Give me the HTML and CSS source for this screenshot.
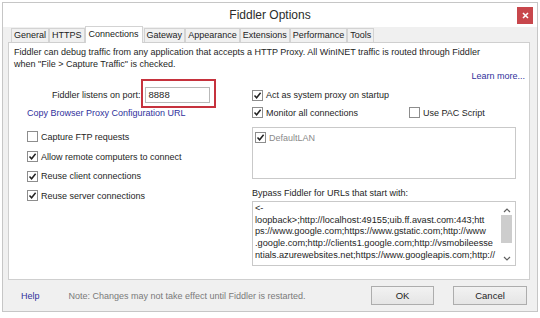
FILE: index.html
```html
<!DOCTYPE html>
<html lang="en">
<head>
  <meta charset="UTF-8" />
  <title>Fiddler Options</title>
  <link rel="stylesheet" href="styles.css">
</head>
<body>
  <div class="window">
    <div class="titlebar">
      <span class="title">Fiddler Options</span>
      <span class="close">
        <svg width="7" height="7" viewBox="0 0 7 7"><path d="M1 1 L6 6 M6 1 L1 6" stroke="#fff" stroke-width="1.6"/></svg>
      </span>
    </div>

    <div class="tabs">
      <span class="tab">General</span>
      <span class="tab">HTTPS</span>
      <span class="tab active">Connections</span>
      <span class="tab">Gateway</span>
      <span class="tab">Appearance</span>
      <span class="tab">Extensions</span>
      <span class="tab">Performance</span>
      <span class="tab">Tools</span>
    </div>

    <div class="panel">
      <p class="intro">Fiddler can debug traffic from any application that accepts a HTTP Proxy. All WinINET traffic is routed through Fiddler<br>when "File &gt; Capture Traffic" is checked.</p>
      <div class="learn"><a class="link">Learn more...</a></div>

      <div class="columns">
        <div class="col-left">
          <div class="port-row">
            <span>Fiddler listens on port:</span>
            <span class="highlight"><span class="port">8888</span></span>
          </div>
          <a class="link copy">Copy Browser Proxy Configuration URL</a>
          <div class="checks">
            <div class="check"><span class="box"></span>Capture FTP requests</div>
            <div class="check"><span class="box on"></span>Allow remote computers to connect</div>
            <div class="check"><span class="box on"></span>Reuse client connections</div>
            <div class="check"><span class="box on"></span>Reuse server connections</div>
          </div>
        </div>

        <div class="col-right">
          <div class="check row1"><span class="box on"></span>Act as system proxy on startup</div>
          <div class="row2">
            <div class="check"><span class="box on"></span>Monitor all connections</div>
            <div class="check"><span class="box"></span>Use PAC Script</div>
          </div>
          <div class="listbox">
            <div class="check muted"><span class="box on"></span>DefaultLAN</div>
          </div>
          <div class="bypass-label">Bypass Fiddler for URLs that start with:</div>
          <div class="textbox">
            <div class="lines">
              &lt;-<br>
              loopback&gt;;http://localhost:49155;uib.ff.avast.com:443;htt<br>
              ps://www.google.com;https://www.gstatic.com;http://www<br>
              .google.com;http://clients1.google.com;http://vsmobileesse<br>
              ntials.azurewebsites.net;https://www.googleapis.com;http://
            </div>
            <div class="scrollbar">
              <svg width="8" height="5" viewBox="0 0 8 5"><path d="M1 4 L4 1 L7 4" fill="none" stroke="#606060" stroke-width="1.2"/></svg>
              <span class="thumb"></span>
              <span class="track"></span>
              <svg width="8" height="5" viewBox="0 0 8 5"><path d="M1 1 L4 4 L7 1" fill="none" stroke="#606060" stroke-width="1.2"/></svg>
            </div>
          </div>
        </div>
      </div>
    </div>

    <div class="footer">
      <a class="link">Help</a>
      <span class="note">Note: Changes may not take effect until Fiddler is restarted.</span>
      <button class="btn ok">OK</button>
      <button class="btn cancel">Cancel</button>
    </div>
  </div>
</body>
</html>
```

FILE: styles.css
```css
* {
  box-sizing: border-box;
}
body {
  margin: 0;
  background: #fff;
  font-family: "Liberation Sans", Arial, sans-serif;
  font-size: 9px;
  color: #1e1e1e;
}
.window {
  margin: 2px 0 0 2px;
  width: 536px;
  height: 310px;
  border: 1px solid #c6c6c6;
  background: #f0f0f0;
  display: flex;
  flex-direction: column;
}
.titlebar {
  height: 24px;
  flex: none;
  background: #fff;
  display: grid;
  grid-template-columns: 1fr auto 1fr;
  align-items: center;
  padding: 0 4px;
}
.title {
  grid-column: 2;
  font-size: 12px;
  color: #2b2b2b;
}
.close {
  grid-column: 3;
  justify-self: end;
  width: 16px;
  height: 17px;
  background: #c8474c;
  display: flex;
  align-items: center;
  justify-content: center;
}

/* tab strip */
.tabs {
  height: 15px;
  flex: none;
  display: flex;
  align-items: flex-end;
  padding-left: 8px;
}
.tab {
  height: 14px;
  line-height: 13px;
  padding: 0 2px;
  border: 1px solid #d3d3d3;
  border-bottom: none;
  background: #f0f0f0;
  color: #222;
  white-space: nowrap;
}
.tab.active {
  position: relative;
  z-index: 1;
  height: 17px;
  margin: 0 1px -1px 0;
  padding: 0 3px;
  line-height: 15px;
  background: #fff;
}

.panel {
  flex: none;
  height: 238px;
  margin: 0 7px 0 5px;
  border: 1px solid #cfcfcf;
  background: #fff;
  padding: 3px 4px 0 5px;
}
.intro {
  margin: 0;
  line-height: 12px;
}
.learn {
  text-align: right;
  line-height: 12px;
}
.link {
  color: #30309c;
  text-decoration: none;
}

.columns {
  display: grid;
  grid-template-columns: 225px 264px;
  margin: 4px 0 0 13px;
}

.port-row {
  height: 18px;
  display: flex;
  align-items: center;
  padding-left: 25px;
  gap: 4px;
}
.highlight {
  position: relative;
  display: flex;
}
.highlight::after {
  content: "";
  position: absolute;
  top: -8px;
  left: -4px;
  right: -6px;
  bottom: -5px;
  border: 2px solid #c6323d;
}
.port {
  width: 65px;
  height: 16px;
  border: 1px solid #b9b9b9;
  padding-left: 3px;
  line-height: 14px;
  font-size: 9.5px;
}
.copy {
  display: block;
  margin-top: 3px;
  line-height: 12px;
}
.checks {
  margin-top: 8px;
}
.checks .check {
  height: 19.7px;
}

.check {
  display: flex;
  align-items: center;
  gap: 3px;
  white-space: nowrap;
}
.box {
  width: 11px;
  height: 11px;
  flex: none;
  border: 1px solid #8d8d8d;
  background: #fff;
}
.box.on {
  background: #fff url("data:image/svg+xml,%3Csvg xmlns='http://www.w3.org/2000/svg' width='9' height='9'%3E%3Cpath d='M1.5 4.5 L3.6 6.8 L7.6 1.8' fill='none' stroke='%23222' stroke-width='1.5'/%3E%3C/svg%3E") no-repeat center;
}

.row1 {
  height: 18px;
}
.row2 {
  height: 17px;
  display: grid;
  grid-template-columns: 157px auto;
  align-items: center;
}
.listbox {
  margin-top: 6px;
  height: 52px;
  border: 1px solid #c9c9c9;
  padding: 4px 2px;
}
.muted {
  color: #8a8a8a;
}
.bypass-label {
  margin-top: 8px;
  line-height: 12px;
}
.textbox {
  margin-top: 2px;
  height: 65px;
  border: 1px solid #c9c9c9;
  display: flex;
}
.lines {
  flex: 1;
  padding: 1px 0 0 2px;
  font-size: 9.2px;
  line-height: 11.7px;
  white-space: nowrap;
  overflow: hidden;
}
.scrollbar {
  width: 17px;
  flex: none;
  display: flex;
  flex-direction: column;
  align-items: center;
  padding: 6px 0 4px;
  gap: 2px;
}
.thumb {
  width: 11px;
  height: 28px;
  background: #cdcdcd;
}
.track {
  flex: 1;
}

.footer {
  flex: 1;
  display: flex;
  align-items: center;
  padding: 0 10px 0 18px;
}
.note {
  margin-left: 29px;
  color: #7a7a7a;
}
.btn {
  height: 19px;
  border: 1px solid #adadad;
  background: linear-gradient(#f2f2f2, #e5e5e5);
  font-family: inherit;
  font-size: 9.5px;
  color: #1e1e1e;
  padding: 0;
}
.ok {
  width: 63px;
  margin-left: auto;
}
.cancel {
  width: 74px;
  margin-left: 19px;
}
```
